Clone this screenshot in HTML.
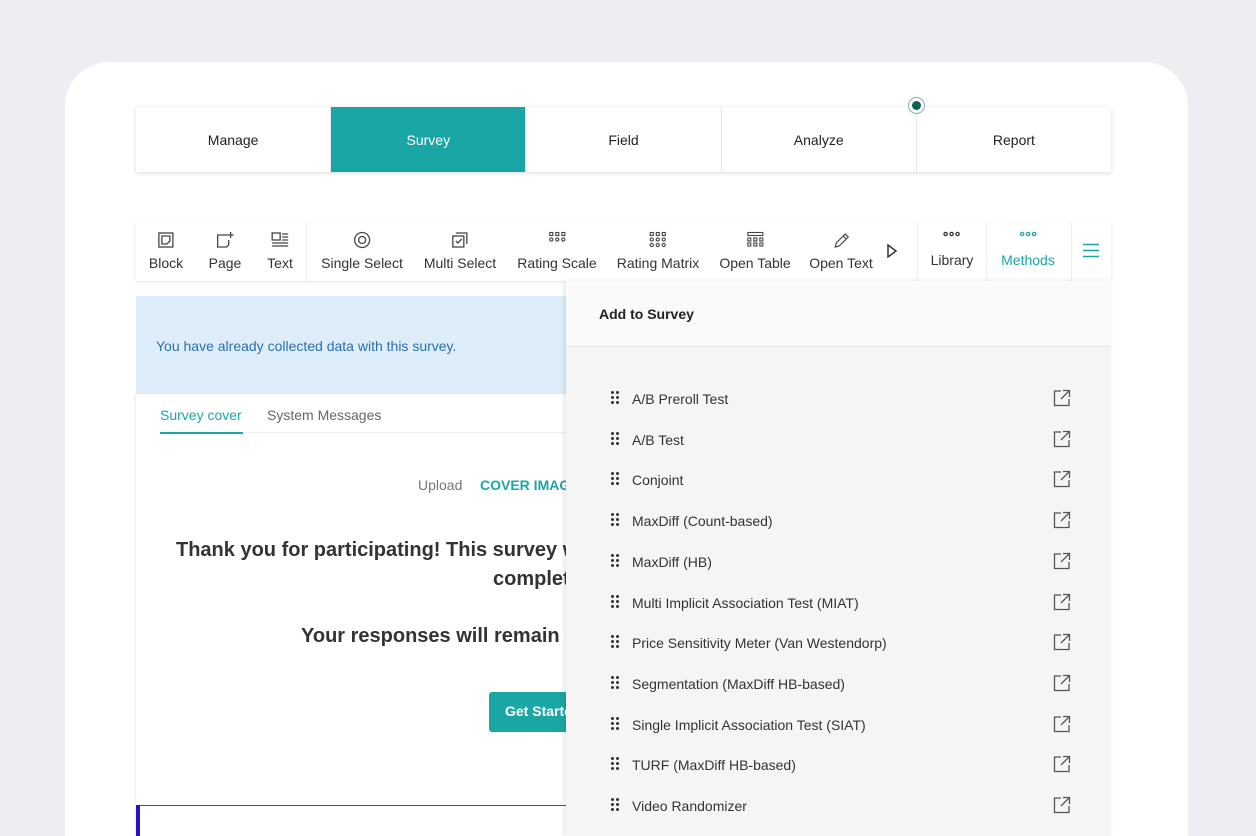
<!DOCTYPE html>
<html style="width:1256px;height:836px;overflow:hidden"><head><style>
*{box-sizing:border-box;margin:0;padding:0}
body{width:1256px;height:836px;background:#eceef1;font-family:"Liberation Sans",sans-serif;position:relative;overflow:hidden;color:#222}
.card{position:absolute;left:65px;top:62px;width:1123px;height:774px;background:#fff;border-radius:44px 44px 0 0}
.nav{position:absolute;left:136px;top:107px;width:975px;height:65px;display:flex;box-shadow:0 1px 4px rgba(0,0,0,.15);background:#fff}
.nav div{flex:1;display:flex;align-items:center;justify-content:center;font-size:14px;border-right:1px solid #e6e6e6}
.nav div.on{background:#1ba6a6;color:#fff}
.dot{position:absolute;left:908px;top:97px;width:17px;height:17px;border-radius:50%;border:1px solid #7fb3b0;background:#fff}
.dot:after{content:"";position:absolute;left:3px;top:3px;width:9px;height:9px;border-radius:50%;background:#0d5f58}
.tb{position:absolute;left:136px;top:222px;width:975px;height:59px;background:#fff;box-shadow:0 1px 3px rgba(0,0,0,.12)}
.it{position:absolute;top:0;height:59px;transform:translateX(-50%);text-align:center;font-size:14px;color:#333;white-space:nowrap}
.it svg{position:absolute;left:50%;top:9px;transform:translateX(-50%)}
.it span{display:block;margin-top:33px}
.vd{position:absolute;top:0;width:1px;height:59px;background:#eee}
.banner{position:absolute;left:136px;top:296px;width:430px;height:98px;background:#ddeefa;color:#2a6fb0;font-size:14px;padding:42px 0 0 20px}
.main{position:absolute;left:136px;top:394px;width:430px;height:442px;background:#fff;box-shadow:-1px 0 2px rgba(0,0,0,.08)}
.t{position:absolute;white-space:nowrap}
.panel{position:absolute;left:566px;top:281px;width:545px;height:555px;background:#f5f5f5;box-shadow:-2px 0 5px rgba(0,0,0,.1)}
.ph{height:66px;background:#fafafa;border-bottom:1px solid #e6e6e6;font-size:14px;font-weight:bold;padding:25px 0 0 33px;color:#222}
.row{position:absolute;left:0;width:545px;height:20px;font-size:14px;color:#333}
.row .g{position:absolute;left:45px;top:2px}
.row .l{position:absolute;left:66px;top:2px}
.row svg.e{position:absolute;left:487px;top:0}
</style></head><body>
<div class="card"></div>
<div class="nav"><div>Manage</div><div class="on">Survey</div><div>Field</div><div>Analyze</div><div style="border:0">Report</div></div>
<div class="dot"></div>
<div class="tb">
<div class="it" style="left:30px"><svg width="18" height="18" viewBox="0 0 18 18" fill="none" stroke="#444" stroke-width="1.3"><rect x="2" y="2" width="14" height="14"/><path d="M5 5h8v5l-3 3H5z"/></svg><span>Block</span></div>
<div class="it" style="left:89px"><svg width="20" height="18" viewBox="0 0 20 18" fill="none" stroke="#444" stroke-width="1.3"><path d="M13 4H3v12h9l2-2V9"/><path d="M16 1v6M13 4h6"/></svg><span>Page</span></div>
<div class="it" style="left:144px"><svg width="20" height="18" viewBox="0 0 20 18" fill="none" stroke="#444" stroke-width="1.3"><rect x="2" y="2" width="8" height="7"/><path d="M12 3h6M12 6h6M12 9h6M2 12h16M2 15h16"/></svg><span>Text</span></div>
<div class="vd" style="left:170px"></div>
<div class="it" style="left:226px"><svg width="18" height="18" viewBox="0 0 18 18" fill="none" stroke="#444" stroke-width="1.3"><circle cx="9" cy="9" r="7.5"/><circle cx="9" cy="9" r="3.5"/></svg><span>Single Select</span></div>
<div class="it" style="left:324px"><svg width="18" height="18" viewBox="0 0 18 18" fill="none" stroke="#444" stroke-width="1.3"><rect x="2" y="5" width="11" height="11"/><path d="M5 2h11v11M5 10l2 2 4-4"/></svg><span>Multi Select</span></div>
<div class="it" style="left:421px"><svg width="18" height="12" viewBox="0 0 18 12" fill="none" stroke="#444" stroke-width="1.1"><rect x="1.5" y="1.5" width="3" height="3"/><rect x="7.5" y="1.5" width="3" height="3"/><rect x="13.5" y="1.5" width="3" height="3"/><circle cx="3" cy="8.5" r="1.6"/><circle cx="9" cy="8.5" r="1.6"/><circle cx="15" cy="8.5" r="1.6"/></svg><span>Rating Scale</span></div>
<div class="it" style="left:522px"><svg width="18" height="18" viewBox="0 0 18 18" fill="none" stroke="#444" stroke-width="1.1"><rect x="1.5" y="1.5" width="3" height="3"/><rect x="7.5" y="1.5" width="3" height="3"/><rect x="13.5" y="1.5" width="3" height="3"/><circle cx="3" cy="8.5" r="1.6"/><circle cx="9" cy="8.5" r="1.6"/><circle cx="15" cy="8.5" r="1.6"/><circle cx="3" cy="14" r="1.6"/><circle cx="9" cy="14" r="1.6"/><circle cx="15" cy="14" r="1.6"/></svg><span>Rating Matrix</span></div>
<div class="it" style="left:619px"><svg width="18" height="16" viewBox="0 0 18 16" fill="none" stroke="#444" stroke-width="1.1"><rect x="1.5" y="1.5" width="15" height="3"/><rect x="1.5" y="7" width="3" height="3"/><rect x="7.5" y="7" width="3" height="3"/><rect x="13.5" y="7" width="3" height="3"/><rect x="1.5" y="12" width="3" height="3"/><rect x="7.5" y="12" width="3" height="3"/><rect x="13.5" y="12" width="3" height="3"/></svg><span>Open Table</span></div>
<div class="it" style="left:705px"><svg width="18" height="18" viewBox="0 0 18 18" fill="none" stroke="#444" stroke-width="1.2"><path d="M3 16l1-4L13 3l3 3-9 9z M11 5l3 3"/></svg><span>Open Text</span></div>
<svg style="position:absolute;left:750px;top:22px" width="12" height="14" viewBox="0 0 12 14" fill="none" stroke="#333" stroke-width="1.5"><path d="M2 1l8 6-8 6z"/></svg>
<div class="vd" style="left:781px"></div>
<div class="it" style="left:816px"><svg width="18" height="6" viewBox="0 0 18 6" fill="none" stroke="#333" stroke-width="1.3"><circle cx="3" cy="3" r="1.6"/><circle cx="9" cy="3" r="1.6"/><circle cx="15" cy="3" r="1.6"/></svg><span style="margin-top:30px">Library</span></div>
<div class="vd" style="left:850px"></div>
<div class="it" style="left:892px;color:#1ba6a6"><svg width="18" height="6" viewBox="0 0 18 6" fill="none" stroke="#1ba6a6" stroke-width="1.3"><circle cx="3" cy="3" r="1.6"/><circle cx="9" cy="3" r="1.6"/><circle cx="15" cy="3" r="1.6"/></svg><span style="margin-top:30px">Methods</span></div>
<div class="vd" style="left:935px"></div>
<svg style="position:absolute;left:946px;top:21px" width="18" height="15" viewBox="0 0 18 15" stroke="#1ba6a6" stroke-width="1.6"><path d="M1 1.5h16M1 7.5h16M1 13.5h16"/></svg>
</div>
<div class="banner">You have already collected data with this survey.</div>
<div class="main">
<div class="t" style="left:24px;top:13px;font-size:14px;color:#1ba6a6">Survey cover</div>
<div class="t" style="left:131px;top:13px;font-size:14px;color:#666">System Messages</div>
<div style="position:absolute;left:24px;top:38px;width:406px;height:1px;background:#eee"></div>
<div style="position:absolute;left:24px;top:38px;width:83px;height:2px;background:#1ba6a6"></div>
<div class="t" style="left:282px;top:83px;font-size:14px;color:#777">Upload</div>
<div class="t" style="left:344px;top:83px;font-size:14px;color:#1ba6a6;font-weight:bold">COVER IMAGE</div>
<div class="t" style="left:40px;top:145px;font-size:20px;font-weight:bold;color:#333">Thank you for participating! This survey will</div>
<div class="t" style="left:357px;top:174px;font-size:20px;font-weight:bold;color:#333">complete</div>
<div class="t" style="left:165px;top:231px;font-size:20px;font-weight:bold;color:#333">Your responses will remain co</div>
<div style="position:absolute;left:353px;top:298px;width:120px;height:40px;background:#1ba6a6;border-radius:3px;color:#fff;font-size:14px;font-weight:bold;padding:11px 0 0 16px">Get Started</div>
<div style="position:absolute;left:0;top:411px;width:430px;height:1px;background:#555"></div>
<div style="position:absolute;left:0;top:411px;width:4px;height:40px;background:#2a10c4"></div>
</div>
<div class="panel">
<div class="ph">Add to Survey</div>
</div>
<div id="rows"></div>
<script>
var n=["A/B Preroll Test","A/B Test","Conjoint","MaxDiff (Count-based)","MaxDiff (HB)","Multi Implicit Association Test (MIAT)","Price Sensitivity Meter (Van Westendorp)","Segmentation (MaxDiff HB-based)","Single Implicit Association Test (SIAT)","TURF (MaxDiff HB-based)","Video Randomizer"];
var h="";n.forEach(function(s,i){var y=389+i*40.7;h+='<div class="row" style="left:566px;position:absolute;top:'+y+'px"><svg class="g" width="8" height="13" viewBox="0 0 8 13" fill="#333"><circle cx="1.5" cy="1.5" r="1.5"/><circle cx="6.5" cy="1.5" r="1.5"/><circle cx="1.5" cy="6.5" r="1.5"/><circle cx="6.5" cy="6.5" r="1.5"/><circle cx="1.5" cy="11.5" r="1.5"/><circle cx="6.5" cy="11.5" r="1.5"/></svg><span class="l">'+s+'</span><svg class="e" width="18" height="18" viewBox="0 0 18 18" fill="none" stroke="#555" stroke-width="1.3"><path d="M8 2H1.5v14.5H16V10M10 1.5h6.5V8M16.5 1.5L8 10"/></svg></div>'});
document.getElementById("rows").innerHTML=h;
</script>
</body></html>
